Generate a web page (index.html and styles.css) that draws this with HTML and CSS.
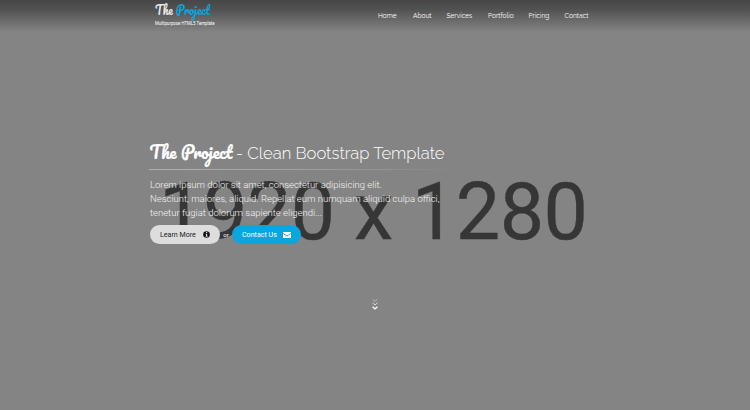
FILE: index.html
```html
<!DOCTYPE html>
<html lang="en">
<head>
<meta charset="utf-8">
<title>The Project</title>
<link rel="stylesheet" href="styles.css">
</head>
<body>
<div class="page">
  <svg class="backdrop" viewBox="0 0 750 410" aria-hidden="true">
    <text x="373.5" y="239" text-anchor="middle" textLength="429">1920 x 1280</text>
  </svg>
  <header class="header">
    <div class="brand">
      <svg class="logo" viewBox="0 0 60 20"><text x="0" y="15" textLength="55" lengthAdjust="spacingAndGlyphs">The <tspan class="blue">Project</tspan></text></svg>
      <svg class="tagline" viewBox="0 0 60 7"><text x="0" y="4.6" textLength="59.5" lengthAdjust="spacingAndGlyphs">Multipurpose HTML5 Template</text></svg>
    </div>
    <nav class="nav">
      <a>Home</a><a>About</a><a>Services</a><a>Portfolio</a><a>Pricing</a><a>Contact</a>
    </nav>
  </header>
  <main class="hero">
    <h1 class="title">
      <svg class="script" viewBox="0 0 83 30"><text x="0.5" y="21" textLength="83" lengthAdjust="spacingAndGlyphs">The Project</text></svg>
      <svg class="rest" viewBox="0 0 210 30"><text x="-1" y="21" textLength="208.5" lengthAdjust="spacingAndGlyphs">- Clean Bootstrap Template</text></svg>
    </h1>
    <div class="rule"></div>
    <p class="lead">Lorem ipsum dolor sit amet, consectetur adipisicing elit.<br>Nesciunt, maiores, aliquid. Repellat eum numquam aliquid culpa offici,<br>tenetur fugiat dolorum sapiente eligendi...</p>
    <div class="actions">
      <a class="btn light">Learn More
        <svg class="info" viewBox="0 0 7 7"><circle cx="3.5" cy="3.5" r="3.3" fill="#111"/><path d="M3 1h1.2v1H3zM2.6 2.7h1.6v2.4h.5v.7H2.5v-.7H3V3.4h-.4z" fill="#ddd"/></svg>
      </a>
      <span class="or">or</span>
      <a class="btn primary">Contact Us
        <svg class="mail" viewBox="0 0 8 6"><path d="M0 .4Q0 0 .4 0h7.2q.4 0 .4.4v.5L4 3.6 0 .9zM0 1.7l4 2.7 4-2.7v3.8q0 .5-.5.5h-7Q0 6 0 5.5z" fill="#fff"/></svg>
      </a>
    </div>
  </main>
  <svg class="scroll" viewBox="0 0 6 12"><g fill="none" stroke="#fff"><path d="M.6 1.3 3 3.3l2.4-2" opacity=".4"/><path d="M.6 4.8 3 7l2.4-2.2" opacity=".7"/><path d="M.6 8.7 3 11l2.4-2.3" stroke-width="1.2"/></g></svg>
</div>
</body>
</html>
```
FILE: styles.css
```css
* { box-sizing: border-box; }
body { margin: 0; background: #848484; font-family: Roboto, sans-serif; color: #fff; }
.page { position: relative; display: flex; flex-direction: column; width: 750px; height: 410px; overflow: hidden; }
.backdrop { position: absolute; inset: 0; width: 750px; height: 410px; }
.backdrop text { font-family: Roboto, sans-serif; font-size: 79px; fill: #363636; stroke: #363636; stroke-width: .4px; }
.header { position: relative; display: flex; height: 32px; padding-left: 155px; background: linear-gradient(#464646, #525252 30%, #848484); }
.brand { display: flex; flex-direction: column; width: 60px; height: 30px; }
.brand svg, .title svg { overflow: visible; }
.logo { width: 60px; height: 20px; font: 400 11.5px Pacifico, Lato, cursive; fill: #e8e8e8; }
.logo .blue { fill: #0ba5df; }
.tagline { width: 60px; height: 7px; font: 4.6px Roboto, sans-serif; fill: #fff; }
.nav { display: grid; grid-template-columns: 35px 33.5px 41.5px 40.5px 36px 30px; margin-left: 163px; padding-top: 12px; font: 400 6.6px/9px Raleway, Lato, sans-serif; color: #fff; }
.hero { position: relative; display: flex; flex-direction: column; width: 310px; margin: 106px 0 0 149px; }
.title { display: flex; gap: 5px; height: 30px; margin: 0; font-weight: 400; }
.title svg { height: 30px; }
.script { width: 83px; font: 400 16.5px Pacifico, Lato, cursive; fill: #fff; stroke: #fff; stroke-width: .2px; }
.rest { width: 210px; font: 300 17.5px Raleway, Lato, sans-serif; fill: #fff; }
.rule { height: 1px; margin-top: 1px; background: linear-gradient(90deg, #b0b0b0, #a0a0a0 50%, #848484); }
.lead { margin: 8px 0 0; padding-left: 1px; font-size: 9.5px; line-height: 14px; font-weight: 300; white-space: nowrap; color: #f4f4f4; }
.actions { display: flex; align-items: center; height: 19px; margin-top: 5px; padding-left: 1px; }
.btn { display: flex; align-items: center; justify-content: space-between; height: 19px; padding: 0 10px; border-radius: 10px; font-size: 7.1px; }
.light { width: 70px; background: #ddd; color: #222; }
.primary { width: 69px; background: #0ba5df; }
.info { width: 7px; height: 7px; }
.mail { width: 8px; height: 6px; }
.or { width: 12px; text-align: center; font-size: 6px; }
.scroll { position: absolute; left: 372px; top: 298px; width: 6px; height: 12px; }
```
